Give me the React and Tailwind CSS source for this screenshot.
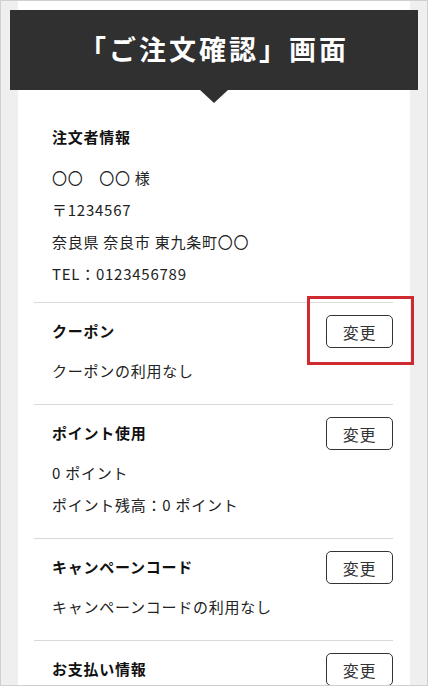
import React from "react";

const sections = [
  { title: "クーポン", lines: ["クーポンの利用なし"] },
  { title: "ポイント使用", lines: ["0 ポイント", "ポイント残高：0 ポイント"] },
  { title: "キャンペーンコード", lines: ["キャンペーンコードの利用なし"] },
  { title: "お支払い情報", lines: [] },
];

function ChangeButton() {
  return (
    <button className="w-[67px] h-[33px] border border-[#333] rounded-[5px] bg-white text-[16px] text-[#333] leading-none tracking-[0.05em]">
      変更
    </button>
  );
}

export default function App() {
  return (
    <div
      className="relative w-[428px] h-[686px] overflow-hidden border border-[#cfcfcf] bg-[#efefef] px-[17px]"
      style={{ fontFamily: '"Noto Sans CJK JP", "Noto Sans", sans-serif' }}
    >
      <div className="bg-white h-full pl-[16px] pr-[17px] pt-[9px]">
        {/* Header */}
        <div className="relative -ml-[24px] -mr-[25px] h-[80px] bg-[#303030] flex items-center justify-center pb-[4px]">
          <h1 className="text-white text-[27px] font-bold tracking-[3px] leading-none">
            「ご注文確認」画面
          </h1>
          <div className="absolute left-1/2 top-full -translate-x-1/2 w-0 h-0 border-l-[14px] border-r-[14px] border-t-[13px] border-l-transparent border-r-transparent border-t-[#303030]" />
        </div>

        {/* Orderer info */}
        <div className="pl-[18px] pt-[31px] pb-[12px] text-[15px] tracking-[0.05em] text-[#222]">
          <div className="h-[33px] flex items-center font-bold text-[#111]">注文者情報</div>
          <div className="mt-[8px] leading-[32px]">
            <p>〇〇　〇〇 様</p>
            <p>〒1234567</p>
            <p>奈良県 奈良市 東九条町〇〇</p>
            <p>TEL：0123456789</p>
          </div>
        </div>

        {sections.map((s) => (
          <div
            key={s.title}
            className="border-t border-[#d9d9d9] pl-[18px] pt-[12px] pb-[17px] text-[15px] tracking-[0.05em] text-[#222]"
          >
            <div className="h-[33px] flex items-center justify-between">
              <span className="font-bold text-[#111]">{s.title}</span>
              <ChangeButton />
            </div>
            {s.lines.length > 0 && (
              <div className="mt-[7px] leading-[32px]">
                {s.lines.map((l) => (
                  <p key={l}>{l}</p>
                ))}
              </div>
            )}
          </div>
        ))}
      </div>

      {/* Annotation highlight */}
      <div className="absolute left-[306px] top-[295px] w-[107px] h-[69px] border-[3px] border-[#cf2a2f]" />
    </div>
  );
}
